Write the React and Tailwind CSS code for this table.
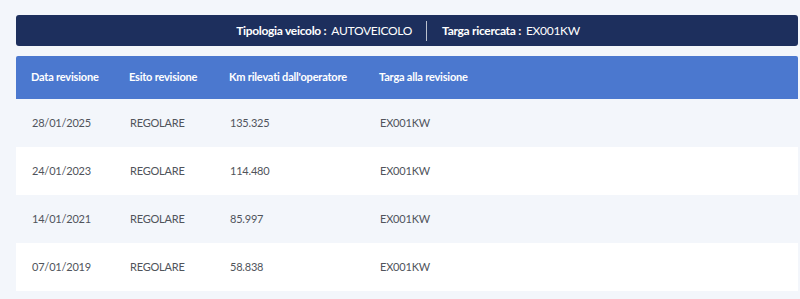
import React from "react";

const rows = [
  { data: "28/01/2025", esito: "REGOLARE", km: "135.325", targa: "EX001KW" },
  { data: "24/01/2023", esito: "REGOLARE", km: "114.480", targa: "EX001KW" },
  { data: "14/01/2021", esito: "REGOLARE", km: "85.997", targa: "EX001KW" },
  { data: "07/01/2019", esito: "REGOLARE", km: "58.838", targa: "EX001KW" },
];

export default function App() {
  return (
    <div
      className="min-h-[299px] bg-[#f3f6fb] pl-4 pr-[2px] pt-[15px] text-[11px] tracking-[-0.2px]"
      style={{ fontFamily: "Lato, 'Open Sans', sans-serif" }}
    >
      {/* riepilogo ricerca */}
      <div className="flex h-[31px] items-center justify-center rounded-[3px] bg-[#1d2f5d] pl-[2px] text-[12px] tracking-[-0.3px] text-white">
        <span className="font-bold">Tipologia veicolo :</span>
        <span className="ml-[5px]">AUTOVEICOLO</span>
        <span className="ml-[14px] mr-[15px] h-[20px] w-px bg-white/70" />
        <span className="font-bold">Targa ricercata :</span>
        <span className="ml-[5px]">EX001KW</span>
      </div>

      <div className="mt-[10px]">
        <div className="flex h-[43px] items-center rounded-t-[2px] bg-[#4b78cf] font-bold text-white">
          <div className="w-[113px] pl-[15px]">Data revisione</div>
          <div className="w-[100px]">Esito revisione</div>
          <div className="w-[150px]">Km rilevati dall'operatore</div>
          <div>Targa alla revisione</div>
        </div>

        {rows.map((r, i) => (
          <div
            key={r.data}
            className={`flex h-[48px] items-center text-[#50545b] ${
              i % 2 === 1 ? "bg-white" : "bg-[#f3f6fb]"
            }`}
          >
            <div className="w-[114px] pl-[16px]">{r.data}</div>
            <div className="w-[100px]">{r.esito}</div>
            <div className="w-[150px]">{r.km}</div>
            <div>{r.targa}</div>
          </div>
        ))}
      </div>
    </div>
  );
}
